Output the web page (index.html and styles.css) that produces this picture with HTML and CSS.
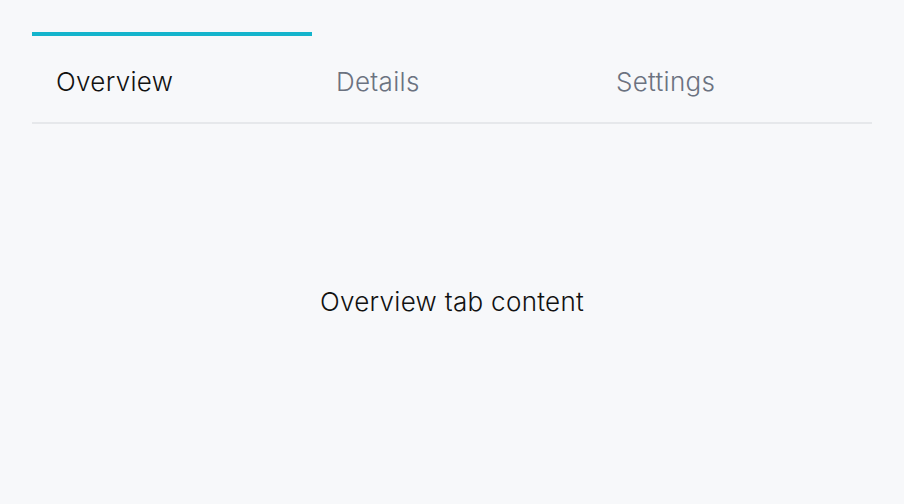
FILE: index.html
```html
<!DOCTYPE html>
<html lang="en">
<head>
<meta charset="utf-8">
<title>Tabs</title>
<link rel="stylesheet" href="styles.css">
</head>
<body>
<div class="tabs">
  <div class="tab-list" role="tablist">
    <button class="tab active" role="tab" aria-selected="true">Overview</button>
    <button class="tab" role="tab" aria-selected="false">Details</button>
    <button class="tab" role="tab" aria-selected="false">Settings</button>
  </div>
  <div class="tab-panel" role="tabpanel">
    <p class="panel-text">Overview tab content</p>
  </div>
</div>
</body>
</html>
```
FILE: styles.css
```css
html, body {
  margin: 0;
  height: 100%;
}
body {
  background: #f7f8fa;
  font-family: Inter, "Noto Sans", sans-serif;
  box-sizing: border-box;
  padding: 32px;
}
.tabs {
  display: flex;
  flex-direction: column;
  height: 100%;
}
.tab-list {
  display: flex;
  border-bottom: 2px solid #e6e8eb;
}
.tab {
  width: 280px;
  box-sizing: border-box;
  background: none;
  border: none;
  border-top: 4px solid transparent;
  padding: 31px 24px 25px;
  margin: 0;
  text-align: left;
  font-family: inherit;
  font-size: 26px;
  font-weight: 300;
  letter-spacing: 0.3px;
  line-height: 30px;
  color: #6b7280;
  cursor: pointer;
}
.tab.active {
  border-top-color: #14b4cc;
  color: #111111;
}
.tab-panel {
  flex: 1;
  display: flex;
  align-items: center;
  justify-content: center;
  padding-top: 8px;
}
.panel-text {
  margin: 0;
  font-size: 26px;
  font-weight: 300;
  letter-spacing: 0.3px;
  line-height: 30px;
  color: #111111;
}
```
